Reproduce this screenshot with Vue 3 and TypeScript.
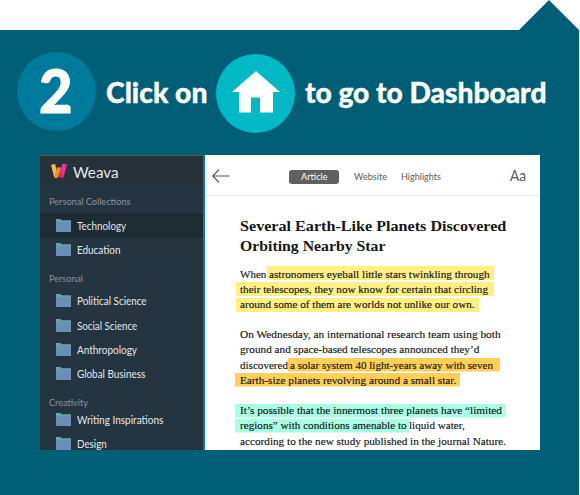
<script setup lang="ts">
import type { Directive } from 'vue'

interface Segment {
  text: string
  gap: number
  width: number
  hl?: 'yellow' | 'orange' | 'mint'
  padL?: number
  padR?: number
  top?: number
  h?: number
}
interface Group {
  title: string
  width: number
  cls: string
  items: { name: string; width: number; active?: boolean }[]
}

// Scales a run of text horizontally so that it fills its measure.
const vFit: Directive<HTMLElement, number> = {
  mounted(el, binding) {
    const natural = el.getBoundingClientRect().width
    if (natural > 0) el.style.transform = `scaleX(${binding.value / natural})`
  },
}

const groups: Group[] = [
  {
    title: 'Personal Collections', width: 81.5, cls: 'first',
    items: [
      { name: 'Technology', width: 49.2, active: true },
      { name: 'Education', width: 43.5 },
    ],
  },
  {
    title: 'Personal', width: 34, cls: 'second',
    items: [
      { name: 'Political Science', width: 69.6 },
      { name: 'Social Science', width: 60.3 },
      { name: 'Anthropology', width: 60 },
      { name: 'Global Business', width: 68.2 },
    ],
  },
  {
    title: 'Creativity', width: 39, cls: 'third',
    items: [
      { name: 'Writing Inspirations', width: 86.3 },
      { name: 'Design', width: 29.7 },
    ],
  },
]

const paragraphs: Segment[][][] = [
  [
    [
      { text: 'When', gap: 0, width: 26.3 },
      { text: 'astronomers eyeball little stars twinkling through', gap: 3, width: 220.7, hl: 'yellow', padL: 2, padR: 4, top: 0.5, h: 14.2 },
    ],
    [{ text: 'their telescopes, they now know for certain that circling', gap: 0, width: 248, hl: 'yellow', padL: 4.2, padR: 6, top: 1.3, h: 14.4 }],
    [{ text: 'around some of them are worlds not unlike our own.', gap: 0, width: 234.6, hl: 'yellow', padL: 4.2, padR: 5.2, top: 2, h: 14.3 }],
  ],
  [
    [{ text: 'On Wednesday, an international research team using both', gap: 0, width: 260.6 }],
    [{ text: 'ground and space-based telescopes announced they’d', gap: 0, width: 239.3 }],
    [
      { text: 'discovered', gap: 0, width: 48 },
      { text: 'a solar system 40 light-years away with seven', gap: 2.6, width: 203, hl: 'orange', padL: 1.8, padR: 6.4, top: 1.5, h: 13.5 },
    ],
    [{ text: 'Earth-size planets revolving around a small star.', gap: 0, width: 216.3, hl: 'orange', padL: 4.5, padR: 4, top: 1.6, h: 13.5 }],
  ],
  [
    [{ text: 'It’s possible that the innermost three planets have “limited', gap: 0, width: 262, hl: 'mint', padL: 4.8, padR: 3.2, top: 1.4, h: 13.5 }],
    [
      { text: 'regions” with conditions amenable to', gap: 0, width: 166.6, hl: 'mint', padL: 4.8, padR: 2.7, top: 1.5, h: 13.5 },
      { text: 'liquid water,', gap: 3.2, width: 55.8 },
    ],
    [{ text: 'according to the new study published in the journal Nature.', gap: 0, width: 266 }],
  ],
]

const markStyle = (s: Segment) => ({
  paddingLeft: `${s.padL ?? 0}px`,
  paddingRight: `${s.padR ?? 0}px`,
  marginLeft: `${s.gap - (s.padL ?? 0)}px`,
  marginRight: `${-(s.padR ?? 0)}px`,
  width: `${s.width}px`,
  backgroundPosition: `0 ${s.top ?? 0}px`,
  backgroundSize: `100% ${s.h ?? 0}px`,
})
</script>

<template>
  <main class="slide">
    <div class="pointer"></div>
    <section class="panel">
      <header class="heading">
        <div class="badge"><span v-fit="33.5" class="run">2</span></div>
        <div class="say before"><span v-fit="101.5" class="run">Click on</span></div>
        <div class="home">
          <svg viewBox="0 0 48 42" width="48" height="42">
            <path d="M24 0 L48 21 H41 V41.5 H28 V26.5 H19 V41.5 H7 V21 H0 Z" fill="#fff" />
          </svg>
        </div>
        <div class="say after"><span v-fit="241.5" class="run">to go to Dashboard</span></div>
      </header>

      <div class="shot">
        <aside class="side">
          <div class="brand">
            <svg class="logo" viewBox="0 0 16 14" width="16" height="14">
              <path d="M0 .8 L4.2 0 L7.2 13.4 H3.2 Z" fill="#e6c04c" />
              <path d="M11 0 H16 L12.5 13.4 H8.6 Z" fill="#e7359a" />
              <path d="M6 3.5 H9.8 L12.4 13.4 H8.8 Z" fill="#ed2377" />
              <path d="M6 3.5 H9.8 L7.2 13.4 H3.2 Z" fill="#f98a1c" />
            </svg>
            <span v-fit="45.5" class="run">Weava</span>
          </div>
          <div v-for="g in groups" :key="g.title" class="group" :class="g.cls">
            <div class="label"><span v-fit="g.width" class="run">{{ g.title }}</span></div>
            <div v-for="i in g.items" :key="i.name" class="item" :class="{ active: i.active }">
              <svg class="folder" viewBox="0 0 15 13" width="15" height="13">
                <path d="M0 0 H4.5 L5.5 1.2 H15 V13 H0 Z" fill="#65a5aa" />
                <path d="M0 3 H15 V13 H0 Z" fill="#698fb2" />
              </svg>
              <span v-fit="i.width" class="run">{{ i.name }}</span>
            </div>
          </div>
        </aside>

        <article class="reader">
          <nav class="tools">
            <svg class="back" viewBox="0 0 18 14" width="18" height="14">
              <path d="M17.5 7 H.8 M7 .7 L.8 7 L7 13.3" fill="none" stroke="#505050" stroke-width="1.1" />
            </svg>
            <div class="tab on"><span v-fit="26.5" class="run">Article</span></div>
            <div class="tab site"><span v-fit="33" class="run">Website</span></div>
            <div class="tab high"><span v-fit="40" class="run">Highlights</span></div>
            <div class="size"><span v-fit="16" class="run">Aa</span></div>
          </nav>
          <div class="story">
            <h1>
              <span v-fit="266.3" class="run">Several Earth-Like Planets Discovered</span>
              <span v-fit="145.5" class="run">Orbiting Nearby Star</span>
            </h1>
            <p v-for="(p, pi) in paragraphs" :key="pi">
              <span v-for="(line, li) in p" :key="li" class="line">
                <span v-for="s in line" :key="s.text" class="seg" :class="s.hl" :style="markStyle(s)">
                  <span v-fit="s.width" class="run">{{ s.text }}</span>
                </span>
              </span>
            </p>
          </div>
        </article>
      </div>
    </section>
  </main>
</template>

<style>
body { background: #fff; overflow: hidden; }
</style>

<style scoped>
.slide {
  width: 580px;
  height: 495px;
  overflow: hidden;
  font-family: Lato, "Liberation Sans", sans-serif;
}
.run { display: inline-block; white-space: nowrap; transform-origin: 0 50%; }
.pointer {
  width: 60px;
  height: 30px;
  margin-left: 519px;
  background: #005f77;
  clip-path: polygon(50% 0, 100% 100%, 0 100%);
}
.panel {
  box-sizing: border-box;
  width: 579px;
  height: 465px;
  background: #005f77;
}
.heading { display: flex; height: 125px; color: #fff; }
.badge {
  box-sizing: border-box;
  width: 79px;
  height: 79px;
  margin: 22px 0 0 17px;
  padding-left: 21.5px;
  border-radius: 50%;
  background: #007a9b;
  font-size: 60px;
  font-weight: 900;
  line-height: 77px;
  -webkit-text-stroke: 1.1px #fff;
}
.say {
  margin-top: 42.5px;
  font-size: 28px;
  font-weight: 900;
  line-height: 38px;
  -webkit-text-stroke: 0.35px #fff;
}
.before { width: 110.5px; margin-left: 9.5px; }
.home {
  display: flex;
  justify-content: center;
  width: 79px;
  height: 79px;
  margin-top: 24px;
  border-radius: 50%;
  background: #00b9c4;
}
.home svg { margin-top: 16.5px; }
.after { margin-left: 10px; }
.shot { display: flex; width: 500px; height: 295px; margin-left: 40px; overflow: hidden; }
.side {
  width: 163px;
  height: 295px;
  overflow: hidden;
  background: #243541;
  color: #e3e8eb;
}
.brand {
  box-sizing: border-box;
  display: flex;
  height: 30px;
  padding-left: 11px;
  border-top: 1px solid #4d6066;
  background: #263139;
  font-size: 15.5px;
  line-height: 32px;
}
.logo { width: 16px; margin: 8px 6px 0 0; }
.label { padding-left: 9px; color: #8b9499; font-size: 9.7px; }
.item {
  display: flex;
  align-items: center;
  box-sizing: border-box;
  height: 24.2px;
  padding-left: 16px;
  font-size: 10.8px;
}
.item.active { background: #1f2b33; }
.folder { width: 15px; margin-right: 6px; }
.first .label { height: 28px; line-height: 33px; }
.second .label { height: 27.5px; line-height: 34px; }
.third .label { height: 22px; line-height: 33px; }
.reader {
  width: 335px;
  height: 295px;
  border-left: 2px solid #007fa2;
  background: #fff;
}
.tools {
  box-sizing: border-box;
  display: flex;
  align-items: flex-start;
  height: 41px;
  border-bottom: 1px solid #ebebeb;
  color: #5c5c5c;
  font-size: 9.4px;
}
.back { margin: 14px 0 0 7px; }
.tab { height: 14px; margin-top: 14.5px; line-height: 14px; }
.on {
  box-sizing: border-box;
  width: 50px;
  margin-left: 59px;
  padding-left: 12px;
  border-radius: 3px;
  background: #606060;
  color: #fff;
}
.site { width: 47px; margin-left: 15px; }
.high { width: 109px; }
.size { margin-top: 8.5px; font-size: 15px; line-height: 22px; }
.story { padding-left: 34.7px; font-family: "Liberation Serif", serif; color: #161616; }
h1 {
  display: flex;
  flex-direction: column;
  align-items: flex-start;
  margin: 20px 0 9.5px;
  font-size: 15.6px;
  line-height: 20px;
}
p { margin: 0 0 15.2px; font-size: 11.3px; -webkit-text-stroke: 0.15px #161616; }
.line { display: flex; height: 15.2px; line-height: 17px; }
.seg { box-sizing: content-box; flex: none; height: 19px; background-repeat: no-repeat; }
.yellow { background-image: linear-gradient(#ffef85, #ffef85); }
.orange { background-image: linear-gradient(#ffcf57, #ffcf57); }
.mint { background-image: linear-gradient(#a8ffe4, #a8ffe4); }
</style>
